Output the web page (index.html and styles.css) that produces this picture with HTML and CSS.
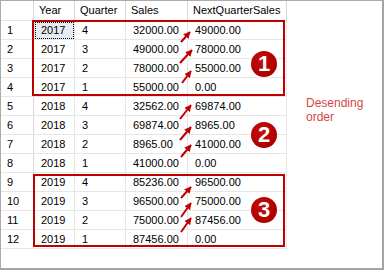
FILE: index.html
```html
<!DOCTYPE html>
<html>
<head>
<meta charset="utf-8">
<link rel="stylesheet" href="styles.css">
</head>
<body>
<div class="frame">
  <div class="grid">
    <div class="hc rn"></div><div class="hc">Year</div><div class="hc">Quarter</div><div class="hc">Sales</div><div class="hc">NextQuarterSales</div>
    <div class="c rn">1</div><div class="c focus">2017</div><div class="c">4</div><div class="c">32000.00</div><div class="c">49000.00</div>
    <div class="c rn">2</div><div class="c">2017</div><div class="c">3</div><div class="c">49000.00</div><div class="c">78000.00</div>
    <div class="c rn">3</div><div class="c">2017</div><div class="c">2</div><div class="c">78000.00</div><div class="c">55000.00</div>
    <div class="c rn">4</div><div class="c">2017</div><div class="c">1</div><div class="c">55000.00</div><div class="c">0.00</div>
    <div class="c rn">5</div><div class="c">2018</div><div class="c">4</div><div class="c">32562.00</div><div class="c">69874.00</div>
    <div class="c rn">6</div><div class="c">2018</div><div class="c">3</div><div class="c">69874.00</div><div class="c">8965.00</div>
    <div class="c rn">7</div><div class="c">2018</div><div class="c">2</div><div class="c">8965.00</div><div class="c">41000.00</div>
    <div class="c rn">8</div><div class="c">2018</div><div class="c">1</div><div class="c">41000.00</div><div class="c">0.00</div>
    <div class="c rn">9</div><div class="c">2019</div><div class="c">4</div><div class="c">85236.00</div><div class="c">96500.00</div>
    <div class="c rn">10</div><div class="c">2019</div><div class="c">3</div><div class="c">96500.00</div><div class="c">75000.00</div>
    <div class="c rn">11</div><div class="c">2019</div><div class="c">2</div><div class="c">75000.00</div><div class="c">87456.00</div>
    <div class="c rn">12</div><div class="c">2019</div><div class="c">1</div><div class="c">87456.00</div><div class="c">0.00</div>
  </div>

  <div class="box box1"></div>
  <div class="box box3"></div>

  <svg class="arrows" width="384" height="270" viewBox="0 0 384 270">
    <defs>
      <marker id="head" viewBox="0 0 10 10" refX="9" refY="5" markerUnits="userSpaceOnUse" markerWidth="7" markerHeight="7" orient="auto">
        <path d="M0,0 L10,5 L0,10 z" fill="#c00000"/>
      </marker>
    </defs>
    <g stroke="#c00000" stroke-width="2" fill="none" marker-end="url(#head)">
      <line x1="181" y1="42" x2="190" y2="32"/>
      <line x1="180" y1="63" x2="192" y2="50"/>
      <line x1="182" y1="83" x2="191" y2="71"/>
      <line x1="180" y1="119" x2="191" y2="105"/>
      <line x1="180" y1="140" x2="191" y2="127"/>
      <line x1="181" y1="157" x2="191" y2="145"/>
      <line x1="181" y1="198" x2="191" y2="187"/>
      <line x1="181" y1="217" x2="191" y2="203"/>
      <line x1="181" y1="232" x2="191" y2="218"/>
    </g>
  </svg>

  <div class="badge b1">1</div>
  <div class="badge b2">2</div>
  <div class="badge b3">3</div>

  <div class="note">Desending<br>order</div>
</div>
</body>
</html>
```

FILE: styles.css
```css
html, body {
  margin: 0;
  padding: 0;
  background: #ffffff;
}

.frame {
  position: relative;
  width: 384px;
  height: 270px;
  box-sizing: border-box;
  border-top: 1px solid #ababab;
  border-left: 1px solid #ababab;
  border-right: 2px solid #a4a4a4;
  border-bottom: 2px solid #a4a4a4;
  background: #ffffff;
  font-family: "Liberation Sans", Arial, sans-serif;
  font-size: 11px;
  color: #000000;
  overflow: hidden;
}

.grid {
  display: grid;
  grid-template-columns: 33px 41px 51px 62px 99px;
  grid-template-rows: 20px repeat(12, 19px);
  width: 286px;
}

.hc {
  box-sizing: border-box;
  border-right: 1px solid #d9d9d9;
  border-bottom: 1px solid #e3e3e3;
  padding-left: 5px;
  line-height: 19px;
  white-space: nowrap;
}

.c {
  box-sizing: border-box;
  border-right: 1px solid #e6e6e6;
  border-bottom: 1px solid #e6e6e6;
  padding-left: 7px;
  line-height: 18px;
  white-space: nowrap;
}

.c.rn {
  border-right-color: #d9d9d9;
  padding-left: 6px;
}

.focus {
  background: #e7ecf0;
  outline: 1px dotted #000000;
  outline-offset: -2px;
}

.box {
  position: absolute;
  box-sizing: border-box;
  border: 2px solid #c00000;
}

.box1 {
  left: 31px;
  top: 19px;
  width: 253px;
  height: 76px;
}

.box3 {
  left: 32px;
  top: 173px;
  width: 252px;
  height: 73px;
}

.arrows {
  position: absolute;
  left: -1px;
  top: -1px;
  pointer-events: none;
}

.badge {
  position: absolute;
  left: 250px;
  width: 26px;
  height: 26px;
  border-radius: 50%;
  background: radial-gradient(circle at 40% 35%, #c80c0c 0%, #b00000 60%, #a00000 100%);
  color: #ffffff;
  font-weight: bold;
  font-size: 22px;
  line-height: 26px;
  text-align: center;
}

.b1 { top: 50px; }
.b2 { top: 121px; }
.b3 { top: 196px; }

.note {
  position: absolute;
  left: 305px;
  top: 95px;
  color: #d64545;
  font-size: 12px;
  line-height: 14px;
}
```
